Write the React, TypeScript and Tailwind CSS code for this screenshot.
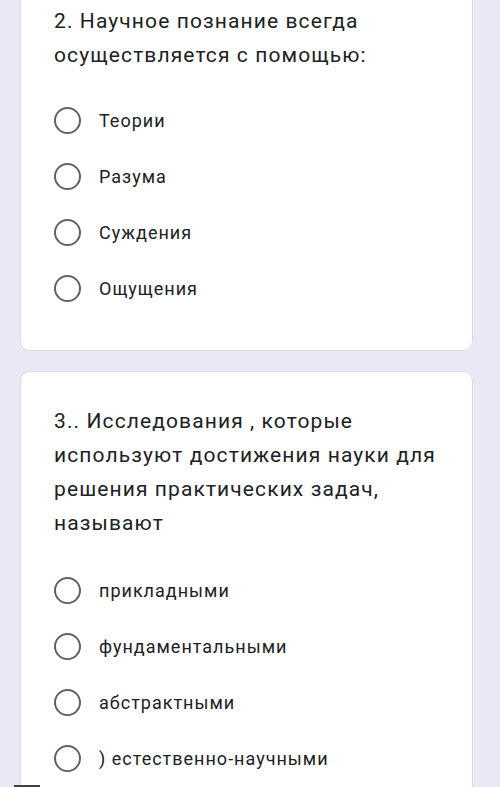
const questions = [
  {
    lines: ["2. Научное познание всегда", "осуществляется с помощью:"],
    options: ["Теории", "Разума", "Суждения", "Ощущения"],
  },
  {
    lines: [
      "3.. Исследования , которые",
      "используют достижения науки для",
      "решения практических задач,",
      "называют",
    ],
    options: ["прикладными", "фундаментальными", "абстрактными", ") естественно-научными"],
  },
];

const Radio = () => (
  <span className="block h-[27px] w-[27px] shrink-0 rounded-full border-[2.5px] border-[#5f6368]" />
);

const QuestionCard = ({
  lines,
  options,
  first,
}: {
  lines: string[];
  options: string[];
  first?: boolean;
}) => {
  return (
    <div
      className={
        first
          ? "mt-[-30px] rounded-[10px] border border-[#dcdae6] bg-white px-[33px] pt-[33px] pb-[34px]"
          : "mt-[20px] rounded-[10px] border border-[#dcdae6] bg-white px-[33px] pt-[32px] pb-[34px]"
      }
    >
      <p className="whitespace-nowrap text-[21px] leading-[34px] tracking-[1.1px] text-[#202124]">
        {lines.map((line) => (
          <span key={line} className="block">
            {line}
          </span>
        ))}
      </p>
      <div className={first ? "mt-[20px]" : "mt-[22px]"}>
        {options.map((option) => (
          <div key={option} className="flex h-[56px] items-center gap-[18px]">
            <Radio />
            <span className="text-[18px] tracking-[1px] text-[#202124]">{option}</span>
          </div>
        ))}
      </div>
    </div>
  );
};

export default function App() {
  return (
    <div
      className="relative h-[787px] w-[500px] overflow-hidden bg-[#ebe8f6]"
      style={{ fontFamily: "Roboto, 'Noto Sans', sans-serif" }}
    >
      <div className="ml-[20px] w-[453px]">
        {questions.map((q, i) => (
          <QuestionCard key={i} lines={q.lines} options={q.options} first={i === 0} />
        ))}
      </div>
      <div className="absolute bottom-0 left-[14px] h-[2px] w-[26px] bg-[#3c4043]" />
    </div>
  );
}
